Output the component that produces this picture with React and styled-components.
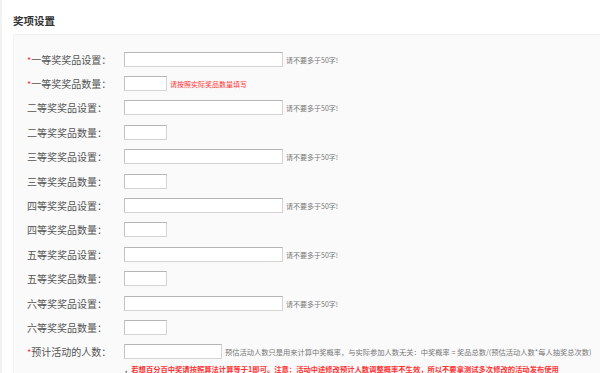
import styled, { createGlobalStyle } from "styled-components";

const GlobalStyle = createGlobalStyle`
  html, body {
    margin: 0;
    padding: 0;
    background: #fff;
    font-family: "Noto Sans CJK SC", "Liberation Sans", sans-serif;
  }
`;

const rows = [
  { label: "一等奖奖品设置：", required: true, wide: true },
  { label: "一等奖奖品数量：", required: true, note: "请按照实际奖品数量填写" },
  { label: "二等奖奖品设置：", wide: true },
  { label: "二等奖奖品数量：" },
  { label: "三等奖奖品设置：", wide: true },
  { label: "三等奖奖品数量：" },
  { label: "四等奖奖品设置：", wide: true },
  { label: "四等奖奖品数量：" },
  { label: "五等奖奖品设置：", wide: true },
  { label: "五等奖奖品数量：" },
  { label: "六等奖奖品设置：", wide: true },
  { label: "六等奖奖品数量：" },
];

const Page = styled.div`
  height: 373px;
  overflow: hidden;
  border-left: 2px solid #f2f2f2;
  padding-left: 11px;
`;

const Title = styled.h3`
  margin: 0;
  padding: 14px 0 0;
  height: 20px;
  font-size: 10.5px;
  font-weight: bold;
  color: #333;
  line-height: 14px;
`;

const Panel = styled.div`
  background: #fafafa;
  border-top: 1px solid #f0f0f0;
  border-left: 1px solid #f3f3f3;
  padding: 12px 0 0 13px;
`;

const Row = styled.div`
  display: flex;
  align-items: center;
  height: 24.4px;
`;

const Label = styled.label`
  width: 97px;
  flex-shrink: 0;
  font-size: 10px;
  color: #555;
  white-space: nowrap;
`;

const Star = styled.span`
  color: #f33;
  font-size: 9px;
`;

const Input = styled.input`
  box-sizing: border-box;
  width: ${(p) => p.$w}px;
  height: 15px;
  margin: 0;
  padding: 0 3px;
  background: #fff;
  border: 1px solid #d4d4d4;
  border-top-color: #b5b5b5;
  border-left-color: #c4c4c4;
  outline: none;
`;

const Hint = styled.span`
  margin-left: 3px;
  font-size: ${(p) => p.$size || 7}px;
  color: ${(p) => (p.$red ? "#f33" : "#777")};
  white-space: nowrap;
  padding-top: 1px;
`;

const Warn = styled.div`
  margin: 0 0 0 97px;
  font-size: 7.3px;
  font-weight: bold;
  color: #f33;
  white-space: nowrap;
  line-height: 10px;
`;

const Dot = styled.span`
  color: #666;
`;

export default function App() {
  return (
    <Page>
      <GlobalStyle />
      <Title>奖项设置</Title>
      <Panel>
        {rows.map((r) => (
          <Row key={r.label}>
            <Label>
              {r.required && <Star>*</Star>}
              {r.label}
            </Label>
            <Input $w={r.wide ? 159 : 43} />
            {r.wide && <Hint>请不要多于50字!</Hint>}
            {r.note && <Hint $red>{r.note}</Hint>}
          </Row>
        ))}
        <Row>
          <Label>
            <Star>*</Star>预计活动的人数：
          </Label>
          <Input $w={98} />
          <Hint $size={7.25}>
            预估活动人数只是用来计算中奖概率，与实际参加人数无关：中奖概率 = 奖品总数/(预估活动人数*每人抽奖总次数)
          </Hint>
        </Row>
        <Warn>
          <Dot>，</Dot>若想百分百中奖请按照算法计算等于1即可。注意：活动中途修改预计人数调整概率不生效，所以不要拿测试多次修改的活动发布使用
        </Warn>
      </Panel>
    </Page>
  );
}
